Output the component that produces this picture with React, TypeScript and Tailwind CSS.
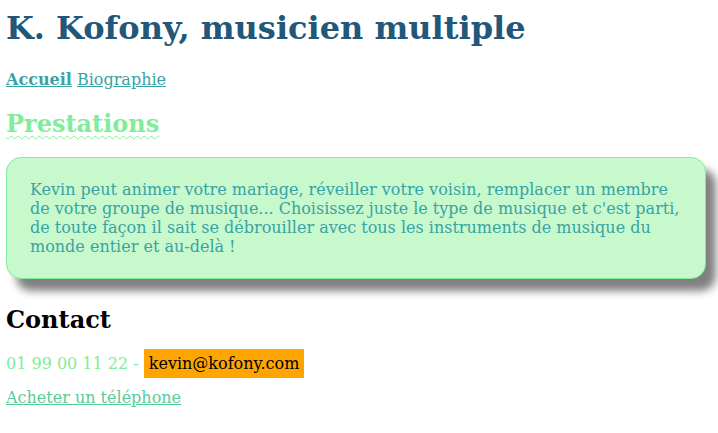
export default function App() {
  return (
    <main className="min-h-screen bg-white px-[6px] font-['DejaVu_Serif',serif] text-base leading-[19px]">
      <h1 className="pt-[10px] text-[32px] leading-[37px] font-bold text-[#22577A]">K. Kofony, musicien multiple</h1>

      <nav className="mt-[23px] text-[#38A3A5]">
        <a href="#" className="font-bold underline">Accueil</a>{" "}
        <a href="#" className="underline">Biographie</a>
      </nav>

      <h2 className="mt-[21px] text-[24px] leading-[28px] font-bold text-[#80ED99] underline decoration-wavy decoration-1 underline-offset-[3px]">
        Prestations
      </h2>

      <section className="mt-[19px] w-[700px] rounded-[15px] border border-[#80ED99] bg-[#C7F9CC] px-[23px] py-[22px] text-[#38A3A5] shadow-[10px_12px_8px_#808080]">
        <p>
          Kevin peut animer votre mariage, réveiller votre voisin, remplacer un membre de votre groupe de
          musique... Choisissez juste le type de musique et c'est parti, de toute façon il sait se débrouiller
          avec tous les instruments de musique du monde entier et au-delà !
        </p>
      </section>

      <h2 className="mt-[27px] text-[24px] leading-[28px] font-bold text-black">Contact</h2>

      <p className="mt-[20px] text-[#80ED99]">
        01 99 00 11 22 -{" "}
        <span className="bg-[#FFA500] px-[5px] py-[5px] font-['DejaVu_Serif',serif] text-black">kevin@kofony.com</span>
      </p>

      <p className="mt-[15px]">
        <a href="#" className="text-[#57CC99] underline">Acheter un téléphone</a>
      </p>
    </main>
  );
}
